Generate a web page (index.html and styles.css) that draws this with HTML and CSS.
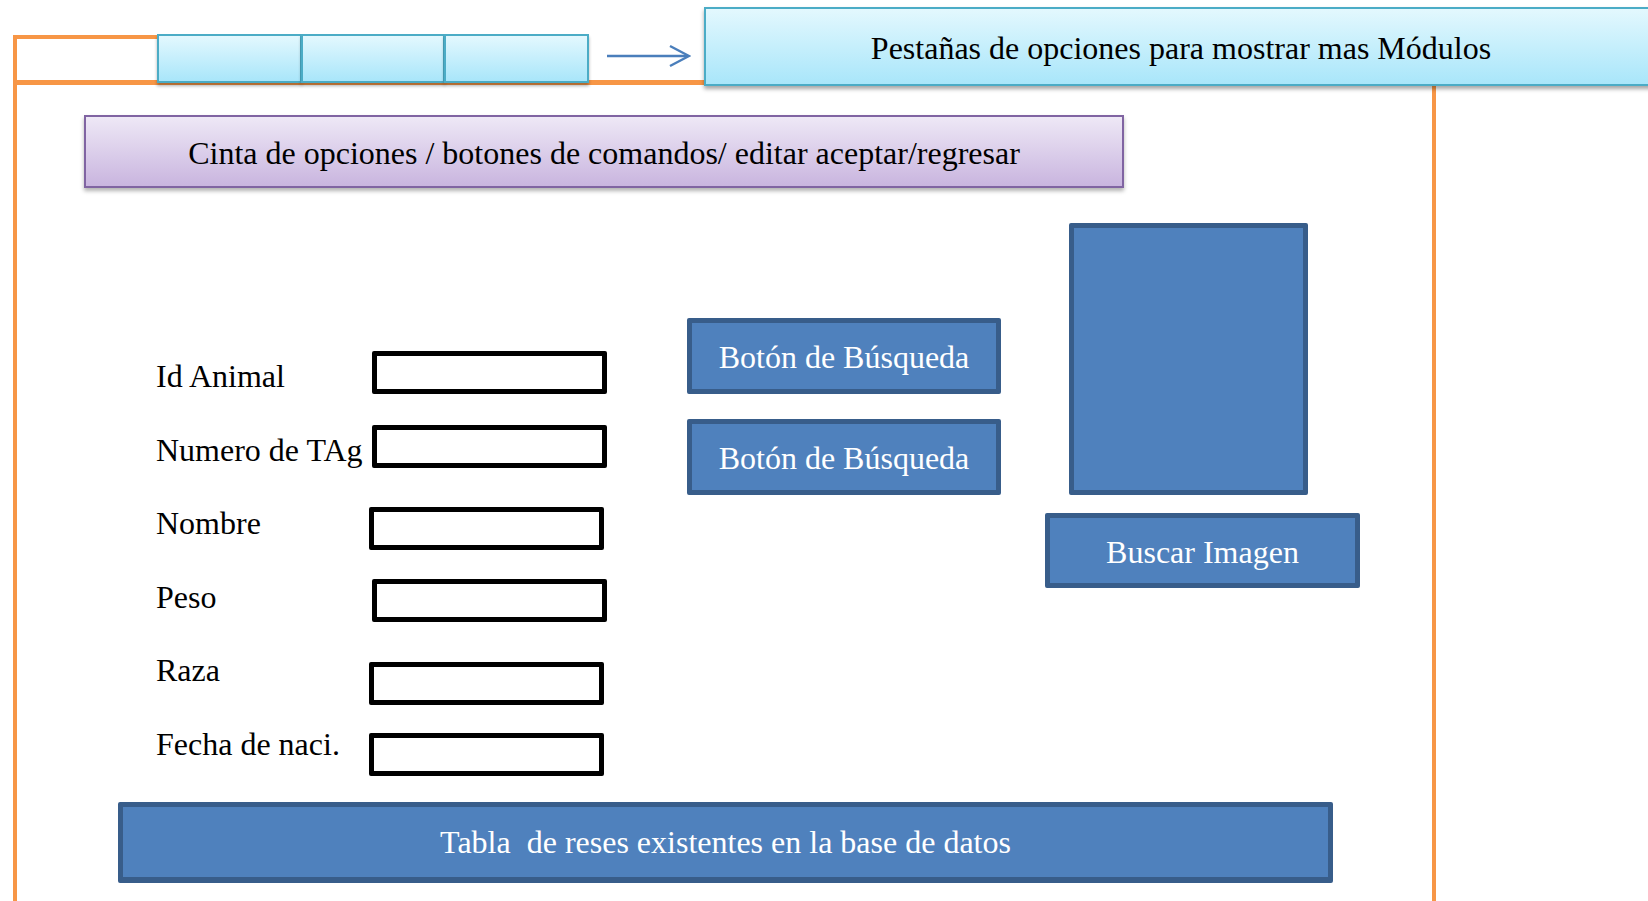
FILE: index.html
```html
<!DOCTYPE html>
<html lang="es">
<head>
  <meta charset="UTF-8" />
  <meta name="viewport" content="width=device-width, initial-scale=1.0" />
  <title>Registro de reses</title>
  <link rel="stylesheet" href="styles.css">
</head>
<body>
  <div class="header">
    <div class="tab-stub"></div>
    <div class="tabs">
      <div class="tab"></div>
      <div class="tab"></div>
      <div class="tab"></div>
    </div>
    <svg class="arrow" width="84" height="24" viewBox="0 0 84 24">
      <path d="M0 12 H81" />
      <path d="M63 2 L82 12 L63 22" />
    </svg>
    <div class="banner">Pestañas de opciones para mostrar mas Módulos</div>
  </div>

  <div class="frame">
    <div class="ribbon">Cinta de opciones / botones de comandos/ editar aceptar/regresar</div>

    <div class="workspace">
      <form class="fields">
        <div class="field"><label>Id Animal</label><input type="text" /></div>
        <div class="field"><label>Numero de TAg</label><input type="text" /></div>
        <div class="field"><label>Nombre</label><input type="text" /></div>
        <div class="field"><label>Peso</label><input type="text" /></div>
        <div class="field"><label>Raza</label><input type="text" /></div>
        <div class="field"><label>Fecha de naci.</label><input type="text" /></div>
      </form>

      <div class="search">
        <button type="button" class="btn">Botón de Búsqueda</button>
        <button type="button" class="btn">Botón de Búsqueda</button>
      </div>

      <div class="picture">
        <div class="picture-box"></div>
        <button type="button" class="btn btn-picture">Buscar Imagen</button>
      </div>
    </div>

    <div class="table-bar">Tabla&nbsp; de reses existentes en la base de datos</div>
  </div>
</body>
</html>
```

FILE: styles.css
```css
body {
  margin: 0;
  overflow: hidden;
  background: white;
  font-family: "Liberation Serif", "Times New Roman", serif;
  font-size: 32px;
  color: black;
}

/* top strip: tabs + arrow + note */
.header {
  position: relative;
  z-index: 1;
  display: flex;
  align-items: flex-start;
  height: 80px;
  padding-left: 13px;
}
.header > * {
  flex: none;
}
.tab-stub {
  box-sizing: border-box;
  width: 145px;
  height: 48px;
  margin-top: 35px;
  border-top: 4px solid #f79646;
  border-left: 4px solid #f79646;
}
.tabs {
  display: flex;
  width: 431px;
  margin-top: 34px;
}
.tab {
  flex: 1;
  box-sizing: border-box;
  height: 49px;
  border: 2px solid #4bacc6;
  margin-left: -1px;
  background: linear-gradient(#e3f8fe, #a9e6fa);
  box-shadow: 0 3px 3px rgba(0,0,0,0.3);
}
.arrow {
  margin: 44px 0 0 18px;
  fill: none;
  stroke: #4a7ebb;
  stroke-width: 2.5;
}
.banner {
  box-sizing: border-box;
  width: 954px;
  height: 79px;
  margin: 7px 0 0 13px;
  padding-top: 3px;
  border: 2px solid #4bacc6;
  background: linear-gradient(#e3f8fe, #a9e6fa);
  box-shadow: 0 3px 4px rgba(0,0,0,0.35);
  display: flex;
  align-items: center;
  justify-content: center;
}

/* orange window frame */
.frame {
  box-sizing: border-box;
  width: 1423px;
  min-height: 840px;
  margin-left: 13px;
  border-top: 5px solid #f79646;
  border-left: 4px solid #f79646;
  border-right: 4px solid #f79646;
}
.ribbon {
  box-sizing: border-box;
  width: 1040px;
  height: 73px;
  margin: 30px 0 0 67px;
  padding-top: 3px;
  border: 2px solid #8064a2;
  background: linear-gradient(#eee8f6, #c9b5df);
  box-shadow: 0 3px 4px rgba(0,0,0,0.3);
  display: flex;
  align-items: center;
  justify-content: center;
}

.workspace {
  display: flex;
  align-items: flex-start;
  margin-top: 35px;
}

/* form fields */
.fields {
  margin: 114px 0 0 139px;
  width: 451px;
}
.field {
  display: flex;
  align-items: flex-start;
  height: 73.5px;
}
.field label {
  width: 216px;
  flex: none;
  line-height: 32px;
  padding-top: 23px;
  white-space: nowrap;
}
.field input {
  box-sizing: border-box;
  width: 235px;
  height: 43px;
  margin: 14px 0 0 0;
  padding: 0;
  border: 5px solid black;
  border-radius: 2px;
  background: white;
}
.field:nth-child(3) input { margin: 23px 0 0 -3px; }
.field:nth-child(4) input { margin-top: 21px; }
.field:nth-child(5) input { margin: 31px 0 0 -3px; }
.field:nth-child(6) input { margin: 28px 0 0 -3px; }

/* blue shapes */
.btn {
  display: flex;
  align-items: center;
  justify-content: center;
  box-sizing: border-box;
  padding: 3px 0 0;
  border: 5px solid #385d8a;
  border-radius: 2px;
  background: #4f81bd;
  color: white;
  font: inherit;
}
.search {
  display: flex;
  flex-direction: column;
  gap: 25px;
  width: 314px;
  margin: 95px 0 0 80px;
}
.search .btn {
  height: 76px;
}
.picture {
  width: 315px;
  margin-left: 44px;
}
.picture-box {
  box-sizing: border-box;
  width: 239px;
  height: 272px;
  margin-left: 24px;
  border: 5px solid #385d8a;
  border-radius: 2px;
  background: #4f81bd;
}
.btn-picture {
  width: 315px;
  height: 75px;
  margin-top: 18px;
}

.table-bar {
  box-sizing: border-box;
  width: 1215px;
  height: 81px;
  margin: 24px 0 0 101px;
  border: 5px solid #385d8a;
  border-bottom-width: 6px;
  border-radius: 2px;
  background: #4f81bd;
  color: white;
  display: flex;
  align-items: center;
  justify-content: center;
}
```
